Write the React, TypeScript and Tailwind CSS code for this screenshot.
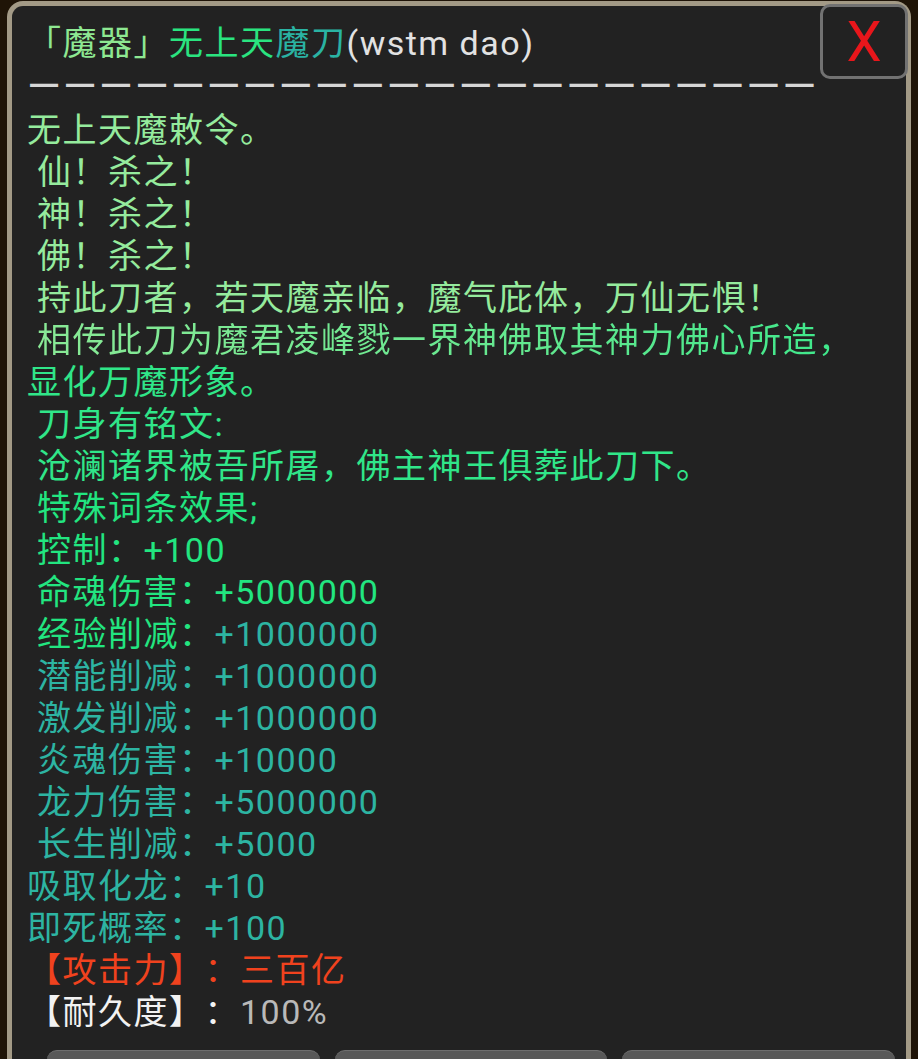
import React from 'react';

type Seg = { t: string; c: string; grad?: boolean };
type Line = Seg[];

const LIGHT = 'text-[#95eb9d]';
const BRIGHT = 'text-[#30e689]';
const GREEN = 'text-[#22e580]';
const TEAL = 'text-[#2db4a2]';
const RED = 'text-[#f0421e]';

const lines: Line[] = [
  [{ t: '无上天魔敕令。', c: LIGHT }],
  [{ t: ' 仙！杀之！', c: LIGHT }],
  [{ t: ' 神！杀之！', c: LIGHT }],
  [{ t: ' 佛！杀之！', c: LIGHT }],
  [{ t: ' 持此刀者，若天魔亲临，魔气庇体，万仙无惧！', c: LIGHT }],
  [{ t: ' 相传此刀为魔君凌峰戮一界神佛取其神力佛心所造，', c: '', grad: true }],
  [{ t: '显化万魔形象。', c: BRIGHT }],
  [{ t: ' 刀身有铭文:', c: BRIGHT }],
  [{ t: ' 沧澜诸界被吾所屠，佛主神王俱葬此刀下。', c: BRIGHT }],
  [{ t: ' 特殊词条效果;', c: GREEN }],
  [{ t: ' 控制：+100', c: GREEN }],
  [{ t: ' 命魂伤害：+5000000', c: GREEN }],
  [{ t: ' 经验削减：', c: GREEN }, { t: '+1000000', c: TEAL }],
  [{ t: ' 潜能削减：+1000000', c: TEAL }],
  [{ t: ' 激发削减：+1000000', c: TEAL }],
  [{ t: ' 炎魂伤害：+10000', c: TEAL }],
  [{ t: ' 龙力伤害：+5000000', c: TEAL }],
  [{ t: ' 长生削减：+5000', c: TEAL }],
  [{ t: '吸取化龙：+10', c: TEAL }],
  [{ t: '即死概率：+100', c: TEAL }],
  [{ t: '【攻击力】：三百亿', c: RED }],
  [{ t: '【耐久度】：', c: 'text-[#f2f2f2]' }, { t: '100%', c: 'text-[#b9b9b9]' }],
];

export default function App() {
  return (
    <div className="relative h-[1059px] w-[918px] overflow-hidden bg-[#1f1407] pt-[1px] pl-[7px] pr-[7px] font-[Roboto,'Noto_Sans_CJK_SC',sans-serif] [text-spacing-trim:space-all]">
      <div className="h-[1100px] rounded-t-[16px] border-[5px] border-b-0 border-[#a39a86] bg-[#222222] pl-[15px]">
        {/* header */}
        <div className="mt-[16px] whitespace-pre text-[34px] leading-[42px] tracking-[1.5px]">
          <span className="text-[#8ee892]">「魔器」</span>
          <span className="text-[#2ae480]">无上天</span>
          <span className="text-[#2ab3a3]">魔刀</span>
          <span className="text-[#e2e2e2]">(wstm dao)</span>
        </div>
        <div className="mt-[9px] whitespace-pre text-[43px] leading-[26px] tracking-[2.4px] text-[#d6d6d6]">
          {'——————————————————————'}
        </div>

        {/* body */}
        <div className="mt-[10px] text-[34px] leading-[42px] tracking-[1.5px]">
          {lines.map((line, i) => (
            <div key={i} className="whitespace-pre">
              {line.map((s, j) =>
                s.grad ? (
                  <span key={j} className="bg-linear-to-r from-[#8ae996] to-[#3ce88b] bg-clip-text text-transparent">
                    {s.t}
                  </span>
                ) : (
                  <span key={j} className={s.c}>{s.t}</span>
                )
              )}
            </div>
          ))}
        </div>

        {/* bottom buttons */}
        <div className="mt-[17px] ml-[20px] flex w-[848px] gap-[15px]">
          <button className="h-[60px] flex-1 rounded-[10px] border-t border-[#6e6e6e] bg-[#585858]" />
          <button className="h-[60px] flex-1 rounded-[10px] border-t border-[#6e6e6e] bg-[#585858]" />
          <button className="h-[60px] flex-1 rounded-[10px] border-t border-[#6e6e6e] bg-[#585858]" />
        </div>
      </div>

      {/* close button */}
      <button className="absolute left-[820px] top-[4px] flex h-[75px] w-[88px] items-center justify-center rounded-[10px] border-[3px] border-[#727272] bg-[#222222] text-[56px] leading-none text-[#e8161b]">
        X
      </button>
    </div>
  );
}
